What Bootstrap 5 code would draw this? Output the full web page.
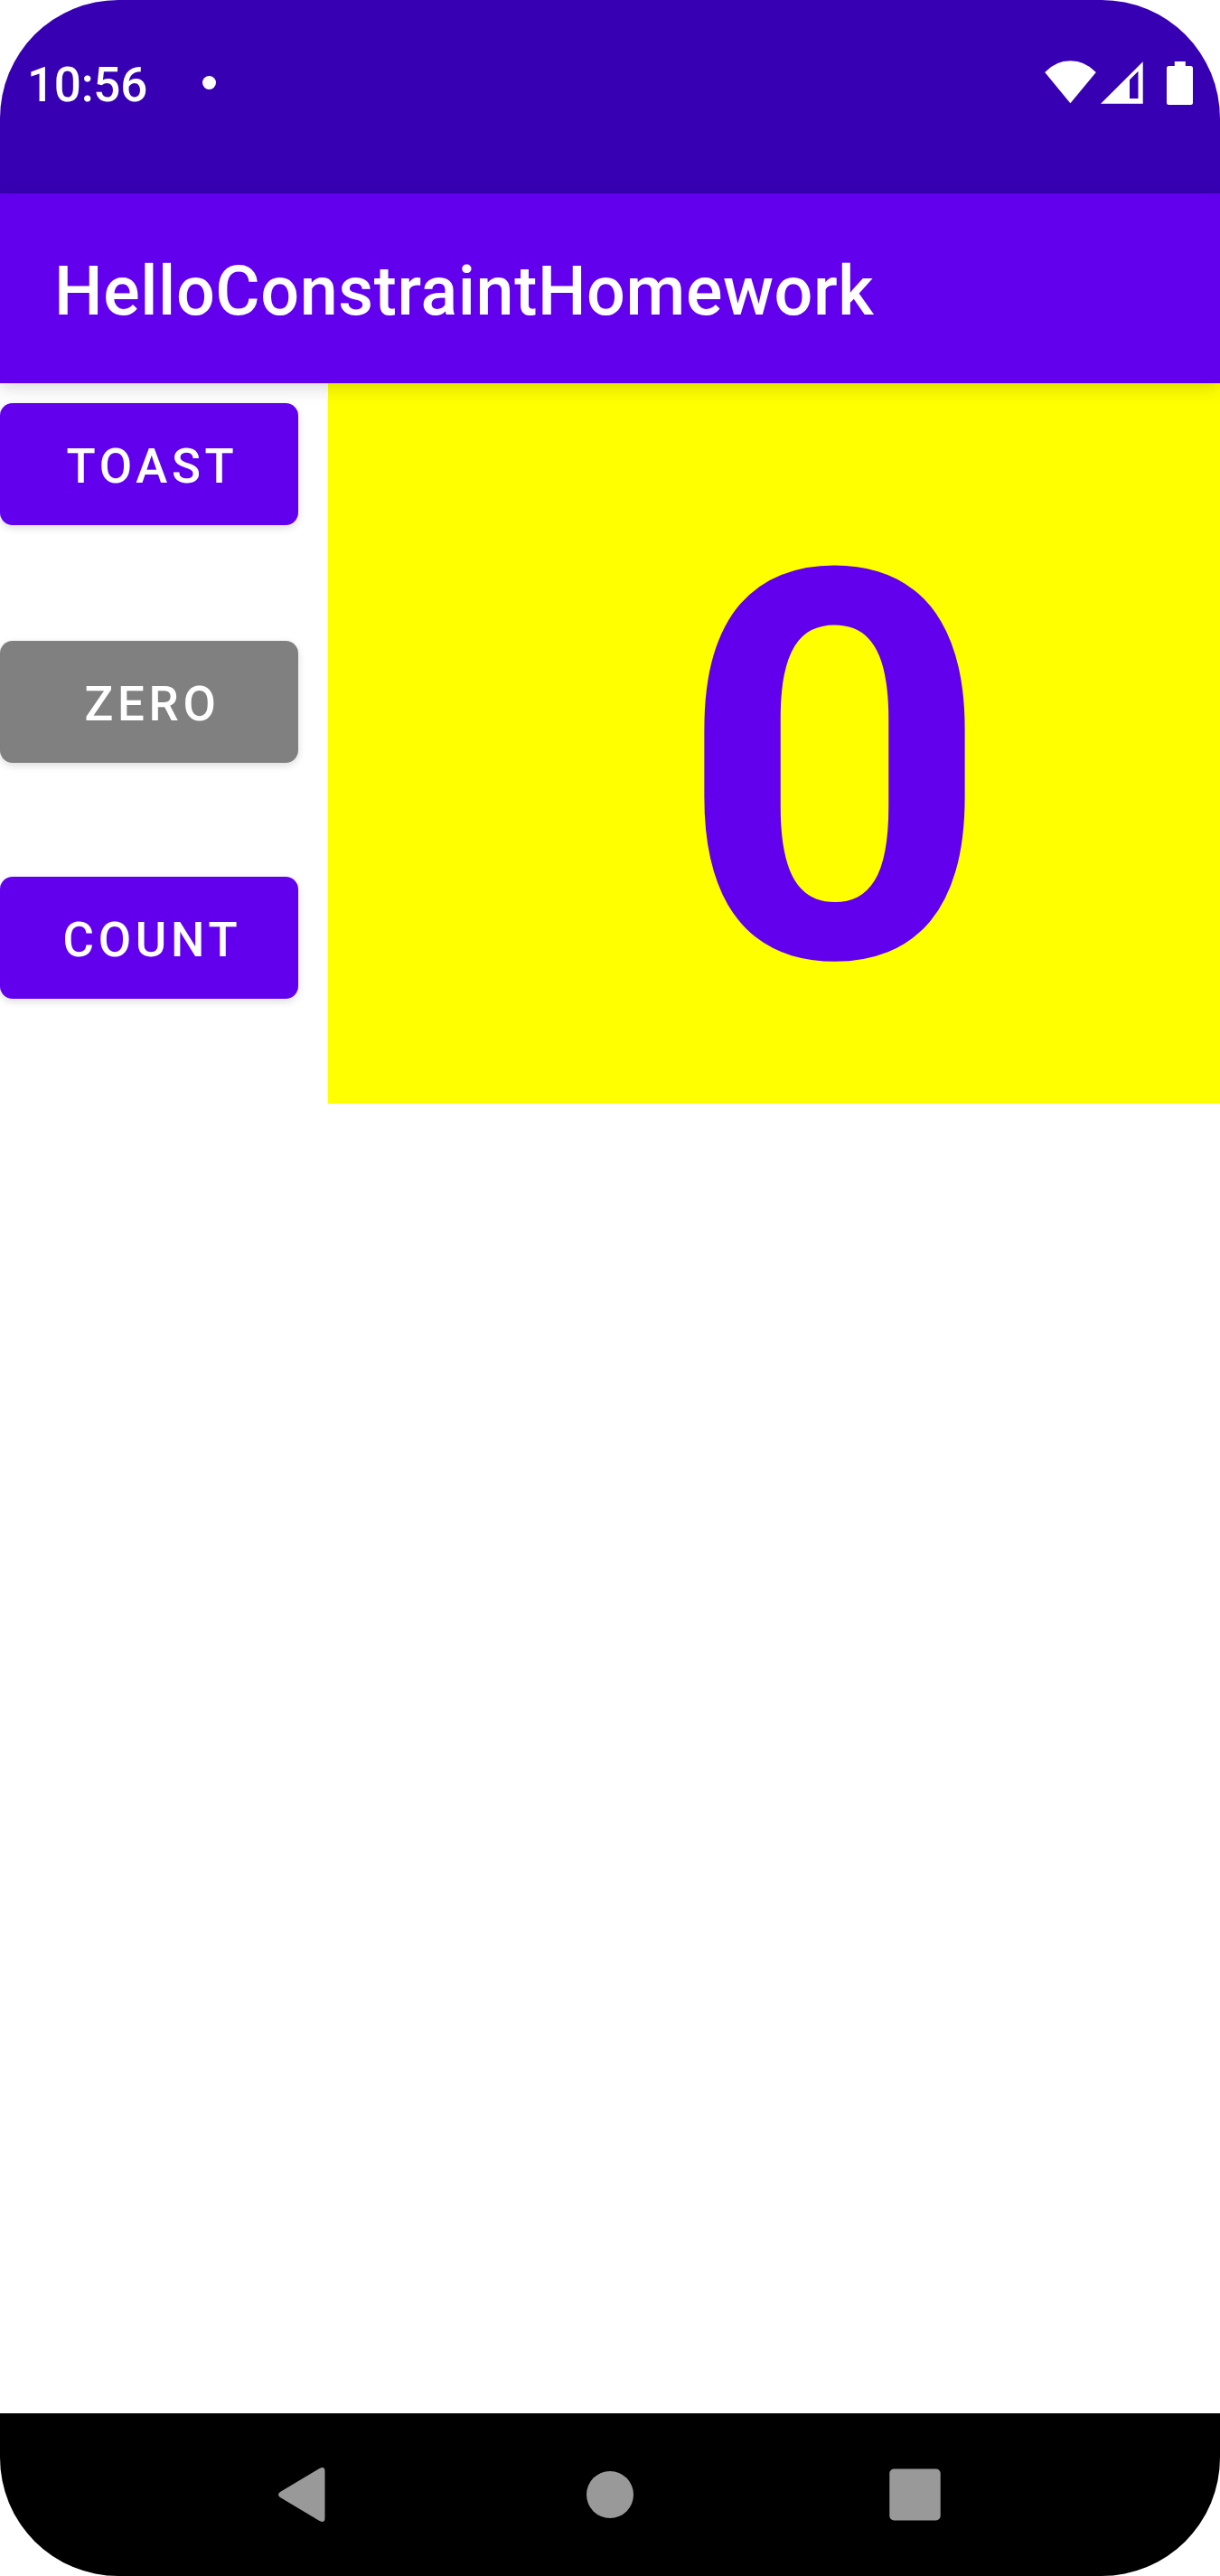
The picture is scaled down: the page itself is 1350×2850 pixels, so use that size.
<!DOCTYPE html>
<html lang="en">
<head>
<meta charset="utf-8">
<meta name="viewport" content="width=device-width, initial-scale=1">
<title>HelloConstraintHomework</title>
<link href="https://cdn.jsdelivr.net/npm/bootstrap@5.3.0/dist/css/bootstrap.min.css" rel="stylesheet">
<style>
  body { font-family: Roboto, "Liberation Sans", sans-serif; background: #fff; }
  .phone { width: 1350px; height: 2850px; border-radius: 131px; }
  .status-bar { height: 214px; background: #3700b3; padding: 49px 30px 0 30px; }
  .clock { font-size: 53px; line-height: 90px; font-weight: 500; letter-spacing: -.3px; padding-top: 5px; }
  .status-line { height: 85px; }
  .notice-dot { width: 15px; height: 15px; margin-left: 61px; background: #fff; }
  .app-bar { height: 210px; background: #6200ee; padding: 6px 60px 0; z-index: 2; box-shadow: 0 5px 18px rgba(0,0,0,.15); }
  .app-title { font-size: 75.5px; line-height: 90px; font-weight: 500; letter-spacing: .6px; color: #fff; }
  .side { width: 363px; padding-top: 22px; }
  .btn-app { --bs-btn-color: #fff; --bs-btn-bg: #6200ee; --bs-btn-hover-color: #fff; --bs-btn-hover-bg: #5600d0;
    width: 330px; height: 135px; border: 0; border-radius: 14px; padding: 4px 0 0 7px; font-size: 52.8px; line-height: 62px;
    font-weight: 500; letter-spacing: 4.7px; box-shadow: 0 3px 9px rgba(0,0,0,.14); }
  .btn-zero { --bs-btn-bg: #808080; --bs-btn-hover-bg: #707070; margin: 128px 0 126px; }
  .counter { background: #ff0; height: 797px; padding-left: 134px; color: #6200ee; font-size: 600px; line-height: 797px; font-weight: 700; }
  .counter span { display: block; padding-top: 30px; }
  .nav-keys { height: 180px; background: #000; padding: 0 168.75px; }
</style>
</head>
<body>
<div class="phone d-flex flex-column overflow-hidden">
  <header class="status-bar text-white flex-shrink-0">
    <div class="status-line d-flex align-items-center">
      <span class="clock">10:56</span>
      <span class="notice-dot rounded-circle"></span>
      <svg class="ms-auto" width="165" height="54" viewBox="1155 65 165 54" fill="#fff">
        <path d="M1184.4 114.2 1156.2 80Q1168 67.3 1184.4 67.3T1212.800 80Z"/>
        <path fill-rule="evenodd" d="M1218 114.8H1264.7V68.2ZM1250 109V88.2L1259.5 78.8V109Z"/>
        <path d="M1299.8 68H1311.8V73H1317.5Q1320 73 1320 75.500V113.5Q1320 116 1317.5 116H1293.5Q1291 116 1291 113.5V75.5Q1291 73 1293.5 73H1299.800Z"/>
      </svg>
    </div>
  </header>
  <nav class="app-bar navbar position-relative flex-shrink-0">
    <span class="app-title">HelloConstraintHomework</span>
  </nav>
  <main class="d-flex align-items-start flex-grow-1">
    <div class="side d-flex flex-column flex-shrink-0">
      <button class="btn btn-app" type="button">TOAST</button>
      <button class="btn btn-app btn-zero" type="button">ZERO</button>
      <button class="btn btn-app" type="button">COUNT</button>
    </div>
    <div class="counter flex-grow-1 text-center overflow-hidden"><span>0</span></div>
  </main>
  <footer class="nav-keys d-flex align-items-center flex-shrink-0">
    <div class="col-4 d-flex justify-content-center">
      <svg width="60" height="60" viewBox="0 0 60 60" fill="#999"><path d="M2 27 45.500 1Q51.500 -1.800 51.500 4V56Q51.500 61.800 45.500 59L2 33Q-2 30 2 27Z"/></svg>
    </div>
    <div class="col-4 d-flex justify-content-center">
      <svg width="52" height="52" viewBox="0 0 52 52" fill="#999"><circle cx="26" cy="26" r="26"/></svg>
    </div>
    <div class="col-4 d-flex justify-content-center">
      <svg width="57" height="58" viewBox="0 0 57 58" fill="#999"><rect x=".3" y=".5" width="56.400" height="57" rx="5"/></svg>
    </div>
  </footer>
</div>
<script src="https://cdn.jsdelivr.net/npm/bootstrap@5.3.0/dist/js/bootstrap.bundle.min.js"></script>
</body>
</html>
